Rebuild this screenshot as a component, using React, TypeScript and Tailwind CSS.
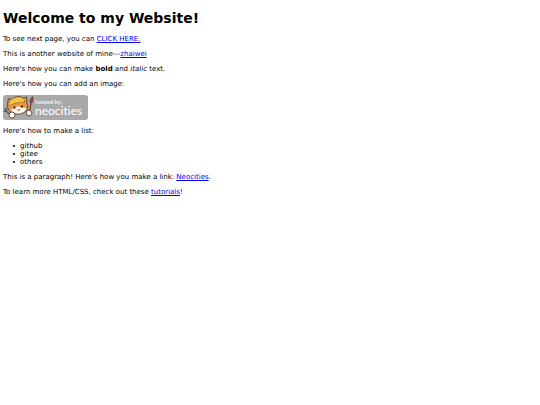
import type { ReactNode } from 'react'

const items = ['github', 'gitee', 'others']

function Link({ href, children }: { href: string; children: ReactNode }) {
  return (
    <a href={href} className="text-[#0000ee] underline">
      {children}
    </a>
  )
}

function NeocitiesBadge() {
  return (
    <svg width="85" height="25" viewBox="0 0 85 25" role="img" aria-label="Hosted by Neocities">
      <rect width="85" height="25" rx="3" fill="#a9a9a9" />
      {/* cat head */}
      <path
        d="M4.5 8.5L5.5 3.5L9 4.5C11 1.5 17 0.5 20 3L23.5 2L24 8.5C25.5 12 24.5 15.5 21 17.5C17 20 10 19.5 7 16.5C5 14.5 4 11.5 4.5 8.5Z"
        fill="#ee9248"
        stroke="#4a3522"
        strokeWidth="0.8"
      />
      <path d="M8 15C10 13 13 13 15 11C17 13 21 12 23 13C23 16 20 18.5 15 18.5C11 18.5 9 17.5 8 15Z" fill="#fff4e4" />
      {/* hard hat */}
      <path d="M5 10C6.5 4 12 1.5 17 2C20 2.5 21 4 22 7L13 8L4.5 11Z" fill="#f4c542" stroke="#8a6420" strokeWidth="0.6" />
      <ellipse cx="11.5" cy="12.5" rx="0.9" ry="1.3" fill="#222" />
      <ellipse cx="19" cy="11.5" rx="0.9" ry="1.3" fill="#222" />
      <path d="M14 14.5L15.5 15.5L17 14" fill="none" stroke="#4a3522" strokeWidth="0.8" />
      {/* wrench and brush */}
      <path d="M1.5 13.5L3 16L9 21M4 13L3 16L0.5 16.5" fill="none" stroke="#555" strokeWidth="1.2" />
      <path d="M26.5 17L28 8" stroke="#8c3a2a" strokeWidth="1.4" />
      <path d="M27 7C27 4.5 28 3 29.5 1.5C30.5 4 30 6.5 28.8 8Z" fill="#b8402c" stroke="#4a2020" strokeWidth="0.6" />
      <circle cx="9" cy="20" r="3" fill="#fff" stroke="#4a3522" strokeWidth="0.8" />
      <circle cx="26" cy="18" r="2.8" fill="#fff" stroke="#4a3522" strokeWidth="0.8" />
      <text x="32" y="9" fontSize="6" fill="#fff" fontFamily="Lato, sans-serif">hosted by,</text>
      <text x="32" y="20" fontSize="12" fill="#fff" fontFamily="Lato, sans-serif" className="[font-variant-ligatures:none]">
        neocities
      </text>
    </svg>
  )
}

export default function App() {
  return (
    <main className="flex flex-col gap-[7px] px-[3px] pt-2 font-['Verdana','DejaVu_Sans',sans-serif] text-[7px] leading-2 text-black">
      <h1 className="text-[14px] leading-5 font-bold">Welcome to my Website!</h1>
      <p>
        To see next page, you can <Link href="#next">CLICK HERE.</Link>
      </p>
      <p>
        This is another website of mine---<Link href="#zhaiwei">zhaiwei</Link>
      </p>
      <p>
        Here's how you can make <strong>bold</strong> and <em>italic</em> text.
      </p>
      <p>Here's how you can add an image:</p>
      <NeocitiesBadge />
      <p>Here's how to make a list:</p>
      <ul className="pl-[10px]">
        {items.map((item) => (
          <li key={item} className="flex items-center gap-[5px] before:size-[2px] before:rounded-full before:bg-black">
            {item}
          </li>
        ))}
      </ul>
      <p>
        This is a paragraph! Here's how you make a link: <Link href="#neocities">Neocities</Link>.
      </p>
      <p>
        To learn more HTML/CSS, check out these <Link href="#tutorials">tutorials</Link>!
      </p>
    </main>
  )
}
